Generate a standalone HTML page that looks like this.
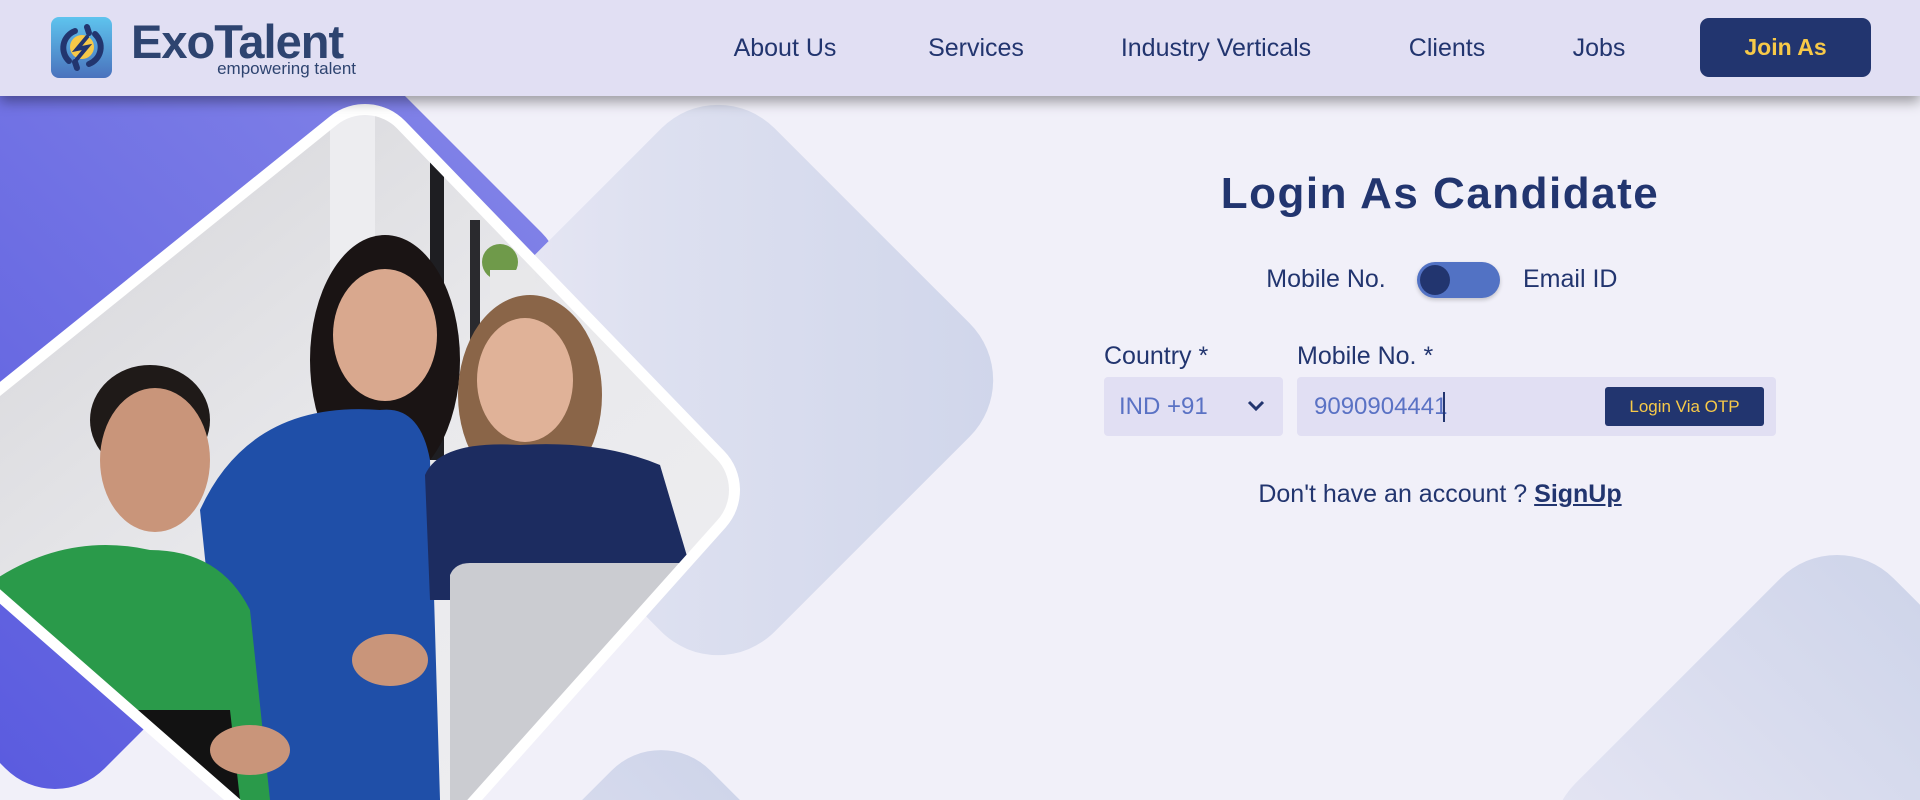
<!DOCTYPE html>
<html><head><meta charset="utf-8"><style>
*{margin:0;padding:0;box-sizing:border-box}
body{width:1920px;height:800px;overflow:hidden;background:#f1f0f9;font-family:"Liberation Sans",sans-serif;position:relative;color:#22356f}
#bg{position:absolute;left:0;top:0}
header{position:absolute;left:0;top:0;width:1920px;height:96px;background:#e1dff3;box-shadow:0 6px 12px rgba(0,0,0,.35);z-index:5}
.logo-t{position:absolute;left:131px;top:14px;font-size:47px;font-weight:bold;color:#2e4470;letter-spacing:-1px}
.logo-s{position:absolute;right:1564px;top:59px;font-size:17px;color:#2e4470;white-space:nowrap}
nav a{position:absolute;top:34px;font-size:25px;color:#22356f;text-decoration:none;transform:translateX(-50%);white-space:nowrap}
.join{position:absolute;left:1700px;top:18px;width:171px;height:59px;background:#22356f;border-radius:9px;color:#f7c948;font-size:23px;font-weight:bold;text-align:center;line-height:59px}
.c{position:absolute;transform:translateX(-50%);white-space:nowrap}
h1{position:absolute;left:1440px;top:169px;transform:translateX(-50%);font-size:44px;letter-spacing:1.5px;white-space:nowrap;color:#22356f}
.lbl{position:absolute;font-size:25px;color:#22356f}
.box{position:absolute;background:#e1dff3;border-radius:4px}
</style></head><body>
<svg id="bg" width="1920" height="800" viewBox="0 0 1920 800">
<defs>
<linearGradient id="pg" x1="0" y1="0" x2="0" y2="1"><stop offset="0" stop-color="#7f80e7"/><stop offset="1" stop-color="#5b5cdf"/></linearGradient>
<linearGradient id="lg" x1="1" y1="0" x2="0" y2="1"><stop offset="0" stop-color="#cfd5ea"/><stop offset="0.6" stop-color="#dde0f0"/><stop offset="1" stop-color="#eceaf6"/></linearGradient>
<linearGradient id="lg2" x1="0" y1="0" x2="0" y2="1"><stop offset="0" stop-color="#cfd5ea"/><stop offset="1" stop-color="#e6e6f4"/></linearGradient>
<linearGradient id="wall" x1="0" y1="0" x2="1" y2="1"><stop offset="0" stop-color="#cfcfd3"/><stop offset="0.5" stop-color="#e9e9ec"/><stop offset="1" stop-color="#f1f1f3"/></linearGradient>
<mask id="ph"><polygon points="365,160 684,490 364,848 -45,490" fill="#fff" stroke="#fff" stroke-width="90" stroke-linejoin="round"/></mask>
</defs>
<rect x="-379" y="-379" width="758" height="758" rx="70" fill="url(#pg)" transform="translate(55,282) rotate(45)"/>
<rect x="-218" y="-218" width="436" height="436" rx="80" fill="url(#lg)" transform="translate(718,380) rotate(45)"/>
<rect x="-205" y="-205" width="410" height="410" rx="70" fill="url(#lg2)" transform="translate(661,1011) rotate(45)"/>
<rect x="-225" y="-225" width="450" height="450" rx="80" fill="url(#lg2)" transform="translate(1837,840) rotate(45)"/>
<polygon points="365,160 684,490 364,848 -45,490" fill="#fff" stroke="#fff" stroke-width="112" stroke-linejoin="round"/>
<g mask="url(#ph)">
<rect x="-150" y="80" width="1000" height="800" fill="url(#wall)"/>
<rect x="330" y="100" width="45" height="600" fill="#ededf0"/>
<rect x="430" y="160" width="14" height="300" fill="#1e1e22"/>
<rect x="470" y="220" width="10" height="260" fill="#2a2a2e"/>
<circle cx="500" cy="262" r="18" fill="#6f9a4a"/>
<rect x="490" y="270" width="45" height="40" fill="#e8e8ea"/>
<ellipse cx="385" cy="360" rx="75" ry="125" fill="#1a1414"/>
<ellipse cx="385" cy="335" rx="52" ry="66" fill="#d9a88e"/>
<path d="M200 510 Q250 400 380 410 Q420 405 430 460 L440 800 L230 800 Z" fill="#1f4fa8"/>
<ellipse cx="530" cy="395" rx="72" ry="100" fill="#8a6548"/>
<ellipse cx="525" cy="380" rx="48" ry="62" fill="#e0b298"/>
<path d="M425 475 Q440 440 520 445 Q600 440 660 465 L700 600 L430 600 Z" fill="#1c2c60"/>
<ellipse cx="150" cy="420" rx="60" ry="55" fill="#1f1a18"/>
<ellipse cx="155" cy="460" rx="55" ry="72" fill="#c9957a"/>
<path d="M-20 590 Q60 530 150 550 Q220 550 250 610 L270 800 L-20 800 Z" fill="#2a9a4a"/>
<path d="M130 710 L230 710 L240 800 L140 800 Z" fill="#121212"/>
<path d="M450 575 Q455 563 470 563 L720 563 L720 800 L450 800 Z" fill="#cbccd1"/>
<ellipse cx="390" cy="660" rx="38" ry="26" fill="#c9957a"/>
<ellipse cx="250" cy="750" rx="40" ry="25" fill="#c9957a"/>
</g>
</svg>
<header>
<svg style="position:absolute;left:51px;top:17px" width="61" height="61" viewBox="0 0 61 61">
<defs><linearGradient id="ig" x1="0" y1="0" x2="0" y2="1"><stop offset="0" stop-color="#5ec4ee"/><stop offset="1" stop-color="#4a72bd"/></linearGradient></defs>
<rect width="61" height="61" rx="8" fill="url(#ig)"/>
<circle cx="31" cy="30" r="12" fill="#f7c948"/>
<path d="M18 44 A18 18 0 0 1 24 14 M36 10 L38 16" stroke="#22356f" stroke-width="6" fill="none" stroke-linecap="round"/>
<path d="M44 17 A18 18 0 0 1 38 47 M26 51 L24 45" stroke="#22356f" stroke-width="6" fill="none" stroke-linecap="round"/>
<path d="M36 20 L26 32 L36 30 L26 42" stroke="#22356f" stroke-width="4" fill="none" stroke-linecap="round"/>
</svg>
<div class="logo-t">ExoTalent</div>
<div class="logo-s">empowering talent</div>
<nav>
<a style="left:785px">About Us</a>
<a style="left:976px">Services</a>
<a style="left:1216px">Industry Verticals</a>
<a style="left:1447px">Clients</a>
<a style="left:1599px">Jobs</a>
</nav>
<div class="join">Join As</div>
</header>
<h1>Login As Candidate</h1>
<div class="lbl c" style="left:1326px;top:265px">Mobile No.</div>
<div style="position:absolute;left:1417px;top:262px;width:83px;height:36px;border-radius:18px;background:#5272c4;box-shadow:0 2px 4px rgba(0,0,0,.2)"></div>
<div style="position:absolute;left:1420px;top:265px;width:30px;height:30px;border-radius:50%;background:#22356f"></div>
<div class="lbl" style="left:1523px;top:265px">Email ID</div>
<div class="lbl" style="left:1104px;top:342px">Country *</div>
<div class="lbl" style="left:1297px;top:342px">Mobile No. *</div>
<div class="box" style="left:1104px;top:377px;width:179px;height:59px"></div>
<div class="lbl" style="left:1119px;top:393px;color:#5a72c4;font-size:24px">IND +91</div>
<svg style="position:absolute;left:1247px;top:399px" width="18" height="14" viewBox="0 0 18 14"><path d="M2 3 L9 10 L16 3" stroke="#22356f" stroke-width="3" fill="none"/></svg>
<div class="box" style="left:1297px;top:377px;width:479px;height:59px"></div>
<div class="lbl" style="left:1314px;top:393px;color:#5a72c4;font-size:24px">9090904441</div>
<div style="position:absolute;left:1443px;top:392px;width:2px;height:30px;background:#22356f"></div>
<div style="position:absolute;left:1605px;top:387px;width:159px;height:39px;background:#22356f;border-radius:3px;color:#f7c948;font-size:17px;text-align:center;line-height:39px">Login Via OTP</div>
<div class="lbl c" style="left:1440px;top:480px">Don't have an account ? <b style="text-decoration:underline">SignUp</b></div>
</body></html>
